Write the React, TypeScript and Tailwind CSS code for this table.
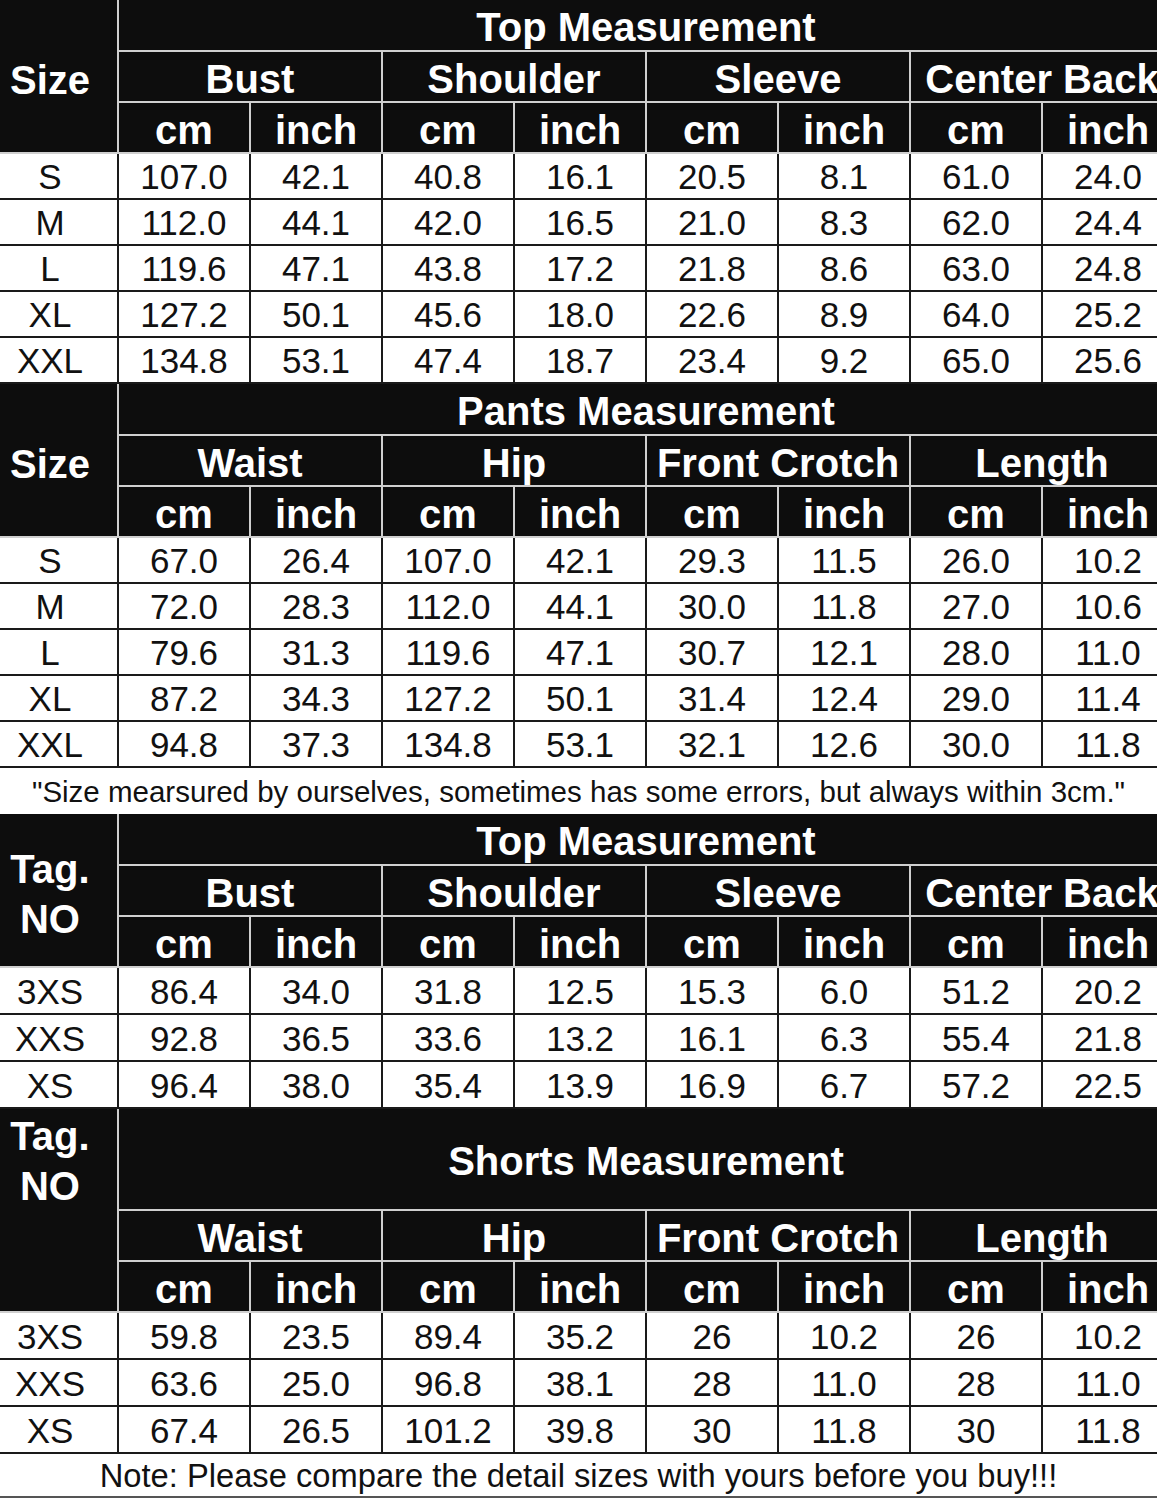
import type { ReactNode } from "react";

type Section = {
  label: ReactNode;
  title: string;
  tallTitle?: boolean;
  groups: string[];
  rows: [string, string[]][];
};

const topGroups = ["Bust", "Shoulder", "Sleeve", "Center Back"];
const bottomGroups = ["Waist", "Hip", "Front Crotch", "Length"];

const tagLabel = (
  <div className="flex flex-col items-center leading-[50px]">
    <span>Tag.</span>
    <span>NO</span>
  </div>
);

const sections: Section[] = [
  {
    label: "Size",
    title: "Top Measurement",
    groups: topGroups,
    rows: [
      ["S", ["107.0", "42.1", "40.8", "16.1", "20.5", "8.1", "61.0", "24.0"]],
      ["M", ["112.0", "44.1", "42.0", "16.5", "21.0", "8.3", "62.0", "24.4"]],
      ["L", ["119.6", "47.1", "43.8", "17.2", "21.8", "8.6", "63.0", "24.8"]],
      ["XL", ["127.2", "50.1", "45.6", "18.0", "22.6", "8.9", "64.0", "25.2"]],
      ["XXL", ["134.8", "53.1", "47.4", "18.7", "23.4", "9.2", "65.0", "25.6"]],
    ],
  },
  {
    label: "Size",
    title: "Pants Measurement",
    groups: bottomGroups,
    rows: [
      ["S", ["67.0", "26.4", "107.0", "42.1", "29.3", "11.5", "26.0", "10.2"]],
      ["M", ["72.0", "28.3", "112.0", "44.1", "30.0", "11.8", "27.0", "10.6"]],
      ["L", ["79.6", "31.3", "119.6", "47.1", "30.7", "12.1", "28.0", "11.0"]],
      ["XL", ["87.2", "34.3", "127.2", "50.1", "31.4", "12.4", "29.0", "11.4"]],
      ["XXL", ["94.8", "37.3", "134.8", "53.1", "32.1", "12.6", "30.0", "11.8"]],
    ],
  },
  {
    label: tagLabel,
    title: "Top Measurement",
    groups: topGroups,
    rows: [
      ["3XS", ["86.4", "34.0", "31.8", "12.5", "15.3", "6.0", "51.2", "20.2"]],
      ["XXS", ["92.8", "36.5", "33.6", "13.2", "16.1", "6.3", "55.4", "21.8"]],
      ["XS", ["96.4", "38.0", "35.4", "13.9", "16.9", "6.7", "57.2", "22.5"]],
    ],
  },
  {
    label: tagLabel,
    title: "Shorts Measurement",
    tallTitle: true,
    groups: bottomGroups,
    rows: [
      ["3XS", ["59.8", "23.5", "89.4", "35.2", "26", "10.2", "26", "10.2"]],
      ["XXS", ["63.6", "25.0", "96.8", "38.1", "28", "11.0", "28", "11.0"]],
      ["XS", ["67.4", "26.5", "101.2", "39.8", "30", "11.8", "30", "11.8"]],
    ],
  },
];

const head = "bg-[#0d0d0d] text-white font-bold text-[40px] flex items-center justify-center whitespace-nowrap pt-1";
const cell = "bg-white text-[#111] text-[35px] flex items-center justify-center pt-[3px]";

function SizeSection({ s, short }: { s: Section; short?: boolean }) {
  return (
    <div className="w-[1173px]">
      <div
        className={
          s.tallTitle
            ? "grid grid-cols-[117px_repeat(8,130px)] grid-rows-[100px_49px_49px] gap-[2px] bg-[#cfcfcf] border-b-2 border-[#cfcfcf]"
            : "grid grid-cols-[117px_repeat(8,130px)] grid-rows-[50px_49px_49px] gap-[2px] bg-[#cfcfcf] border-b-2 border-[#cfcfcf]"
        }
      >
        <div
          className={
            s.tallTitle
              ? "row-span-3 bg-[#0d0d0d] text-white font-bold text-[40px] flex justify-center pt-[2px] pr-[17px]"
              : "row-span-3 bg-[#0d0d0d] text-white font-bold text-[40px] flex items-center justify-center pt-2 pr-[17px]"
          }
        >
          {s.label}
        </div>
        <div className={`col-span-8 ${head}`}>{s.title}</div>
        {s.groups.map((g) => (
          <div key={g} className={`col-span-2 ${head}`}>
            {g}
          </div>
        ))}
        {s.groups.map((g) => [
          <div key={g + "cm"} className={head}>cm</div>,
          <div key={g + "in"} className={head}>inch</div>,
        ])}
      </div>
      <div
        className={
          short
            ? "grid grid-cols-[117px_repeat(8,130px)] auto-rows-[45px] gap-[2px] bg-[#1a1a1a] border-b-2 border-[#1a1a1a]"
            : "grid grid-cols-[117px_repeat(8,130px)] auto-rows-[44px] gap-[2px] bg-[#1a1a1a] border-b-2 border-[#1a1a1a]"
        }
      >
        {s.rows.map(([size, vals]) => [
          <div key={size} className={`${cell} pr-[17px]`}>{size}</div>,
          ...vals.map((v, i) => (
            <div key={size + i} className={cell}>
              {v}
            </div>
          )),
        ])}
      </div>
    </div>
  );
}

export default function App() {
  return (
    <div className="w-[1157px] h-[1500px] overflow-hidden bg-white font-['Liberation_Sans',Arial,sans-serif]">
      <SizeSection s={sections[0]} />
      <SizeSection s={sections[1]} />
      <div className="h-[46px] flex items-center justify-center text-[29.5px] text-[#111] pt-[2px] whitespace-nowrap">
        "Size mearsured by ourselves, sometimes has some errors, but always within 3cm."
      </div>
      <SizeSection s={sections[2]} short />
      <SizeSection s={sections[3]} short />
      <div className="h-[44px] flex items-center justify-center text-[32.7px] text-[#111] border-b-2 border-[#555] pt-[2px] whitespace-nowrap">
        Note: Please compare the detail sizes with yours before you buy!!!
      </div>
    </div>
  );
}
